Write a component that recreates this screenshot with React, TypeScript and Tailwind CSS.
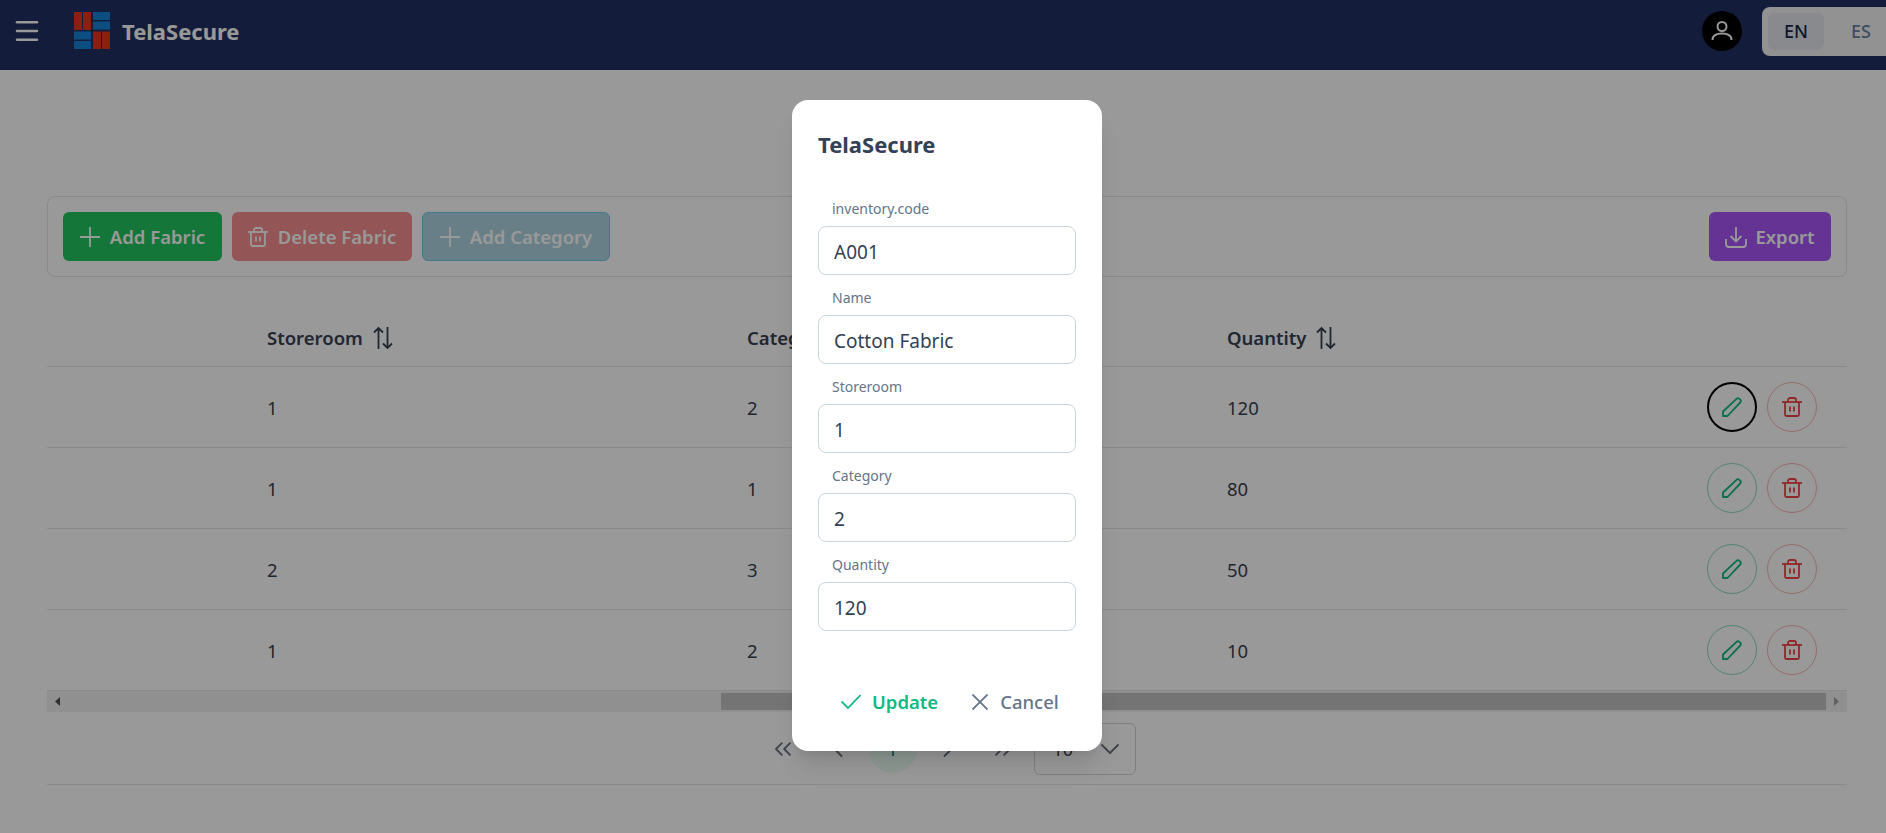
import { ChevronDown, ChevronLeft, ChevronRight, ChevronsLeft, ChevronsRight, Menu } from 'lucide-react';

const FONT = "font-['Noto_Sans','Open_Sans',sans-serif]";

const ROWS = [
  { storeroom: '1', category: '2', quantity: '120', focused: true },
  { storeroom: '1', category: '1', quantity: '80' },
  { storeroom: '2', category: '3', quantity: '50' },
  { storeroom: '1', category: '2', quantity: '10' },
];

const FIELDS = [
  { label: 'inventory.code', value: 'A001' },
  { label: 'Name', value: 'Cotton Fabric' },
  { label: 'Storeroom', value: '1' },
  { label: 'Category', value: '2' },
  { label: 'Quantity', value: '120' },
];

function Logo() {
  return (
    <svg className="-mt-[2px]" width="36" height="37" viewBox="0 0 36 37">
      <rect x="0" y="0" width="8" height="18" fill="#e8361f" />
      <rect x="9" y="0" width="8" height="18" fill="#e8361f" />
      <rect x="19" y="0" width="17" height="8" fill="#1583d5" />
      <rect x="19" y="9.500" width="17" height="8" fill="#1583d5" />
      <rect x="0" y="19.500" width="17" height="8" fill="#1583d5" />
      <rect x="0" y="29" width="17" height="8" fill="#1583d5" />
      <rect x="19" y="19.500" width="8" height="17.500" fill="#e8361f" />
      <rect x="28" y="19.500" width="8" height="17.500" fill="#e8361f" />
    </svg>
  );
}

function PlusIcon() {
  return (
    <svg width="20" height="20" viewBox="0 0 20 20" fill="none" stroke="currentColor" strokeWidth="1.8">
      <path d="M10 0v20M0 10h20" />
    </svg>
  );
}

function TrashIcon() {
  return (
    <svg width="20" height="20" viewBox="0 0 20 20" fill="none" stroke="currentColor" strokeWidth="1.8" strokeLinejoin="round">
      <path d="M0 5h20" />
      <path d="M6 5V3a2 2 0 0 1 2-2h4a2 2 0 0 1 2 2v2" />
      <path d="M3 5v12.500a1.500 1.500 0 0 0 1.500 1.500h11a1.500 1.500 0 0 0 1.500-1.500V5" />
      <path d="M8 9.500v5M12 9.500v5" />
    </svg>
  );
}

function PencilIcon() {
  return (
    <svg width="20" height="20" viewBox="0 0 20 20" fill="none" stroke="currentColor" strokeWidth="1.800" strokeLinejoin="round">
      <path d="M1 19v-4.500L14.500 1.800a2 2 0 0 1 2.800 0l.9.9a2 2 0 0 1 0 2.800L5.500 19z" />
    </svg>
  );
}

function SortIcon() {
  return (
    <svg width="20" height="24" viewBox="0 0 20 24" fill="none" stroke="currentColor" strokeWidth="1.800">
      <path d="M5.500 23V2M1 6.500l4.500-4.500 4.500 4.500" />
      <path d="M14.500 1v21M10 17.500l4.500 4.500 4.500-4.500" />
    </svg>
  );
}

function ExportIcon() {
  return (
    <svg width="22" height="22" viewBox="0 0 22 22" fill="none" stroke="currentColor" strokeWidth="1.8">
      <path d="M11 1v14M5.500 10l5.500 5.500 5.500-5.500" />
      <path d="M1 13v5a3 3 0 0 0 3 3h14a3 3 0 0 0 3-3v-5" />
    </svg>
  );
}

function UserIcon() {
  return (
    <svg width="22" height="22" viewBox="0 0 22 22" fill="none" stroke="currentColor" strokeWidth="2">
      <circle cx="11" cy="6.500" r="4.500" />
      <path d="M1.500 20c0-4 3.500-6.500 9.500-6.500s9.500 2.500 9.500 6.500" />
    </svg>
  );
}

function Header() {
  return (
    <header className="h-[70px] bg-[#213061] flex items-center shrink-0 pb-2">
      <button className="ml-3 text-white">
        <Menu size={30} strokeWidth={2} />
      </button>
      <div className="ml-[32px] flex items-center">
        <Logo />
        <span className="ml-3 text-[22px] font-bold text-white">TelaSecure</span>
      </div>
      <div className="ml-auto flex items-center">
        <div className="w-10 h-10 rounded-full bg-black text-white flex items-center justify-center">
          <UserIcon />
        </div>
        <div className="ml-5 h-[49px] w-[124px] bg-[#f3f4f6] rounded-l-lg flex items-center pl-1.5">
          <span className="w-14 h-[37px] rounded-md bg-[#e5e7eb] flex items-center justify-center text-lg font-medium text-[#1a2647]">EN</span>
          <span className="ml-[27px] text-lg font-medium text-[#6b7f9f]">ES</span>
        </div>
      </div>
    </header>
  );
}

function Toolbar() {
  return (
    <div className="mt-[126px] h-[81px] border border-gray-200 rounded-lg flex items-center justify-between pl-[15px] pr-[15px]">
      <div className="flex items-center gap-2.5">
        <button className="h-[49px] w-[159px] rounded-md bg-[#22c55e] text-white text-[18.5px] font-semibold flex items-center justify-center gap-2.5">
          <PlusIcon /> Add Fabric
        </button>
        <button className="h-[49px] w-[180px] rounded-md bg-[#ef4444] text-white text-[18.5px] font-semibold flex items-center justify-center gap-2.5 opacity-60">
          <TrashIcon /> Delete Fabric
        </button>
        <button className="h-[49px] w-[188px] rounded-md bg-[#7db9d0] border border-[#0ea5e9] text-white text-[18.5px] font-semibold flex items-center justify-center gap-2.5 opacity-60">
          <PlusIcon /> Add Category
        </button>
      </div>
      <button className="h-[49px] w-[122px] rounded-md bg-[#a855f7] text-white text-[18.5px] font-semibold flex items-center justify-center gap-2">
        <ExportIcon /> Export
      </button>
    </div>
  );
}

function Table() {
  return (
    <div className="mt-8 text-[#374151]">
      <div className="grid grid-cols-[220px_480px_480px_480px_1fr] h-[58px] items-center border-b border-gray-200 text-[18.5px] font-semibold">
        <span />
        <span className="flex items-center gap-2.5">Storeroom <SortIcon /></span>
        <span className="flex items-center gap-2.5">Category <SortIcon /></span>
        <span className="flex items-center gap-2.5">Quantity <SortIcon /></span>
        <span />
      </div>
      {ROWS.map((row, i) => (
        <div key={i} className="grid grid-cols-[220px_480px_480px_480px_1fr] h-[81px] items-center border-b border-gray-200 text-[18.5px]">
          <span />
          <span className="pt-px">{row.storeroom}</span>
          <span className="pt-px">{row.category}</span>
          <span className="pt-px">{row.quantity}</span>
          <div className="flex items-center gap-2.5">
            <button className={row.focused
              ? 'w-[50px] h-[50px] rounded-full border-2 border-black text-[#10b981] flex items-center justify-center'
              : 'w-[50px] h-[50px] rounded-full border border-[#10b981]/50 text-[#10b981] flex items-center justify-center'}>
              <PencilIcon />
            </button>
            <button className="w-[50px] h-[50px] rounded-full border border-[#ef4444]/40 text-[#ef4444] flex items-center justify-center">
              <TrashIcon />
            </button>
          </div>
        </div>
      ))}
    </div>
  );
}

function Scrollbar() {
  return (
    <div className="h-[21px] bg-[#f1f1f1] flex items-center">
      <svg className="ml-2" width="5" height="9" viewBox="0 0 5 9"><polygon points="5,0 5,9 0,4.500" fill="#505050" /></svg>
      <div className="ml-[661px] h-[17px] w-[1105px] bg-[#c1c1c1]" />
      <svg className="ml-2" width="5" height="9" viewBox="0 0 5 9"><polygon points="0,0 0,9 5,4.500" fill="#a3a3a3" /></svg>
    </div>
  );
}

function Pagination() {
  return (
    <div className="h-[73px] border-b border-gray-200 flex items-center justify-center pt-px text-[#6b7280]">
      <div className="flex items-center gap-[7px]">
        <button className="w-12 h-12 flex items-center justify-center"><ChevronsLeft size={28} strokeWidth={1.6} /></button>
        <button className="w-12 h-12 flex items-center justify-center"><ChevronLeft size={28} strokeWidth={1.6} /></button>
        <button className="w-12 h-12 rounded-full bg-[#ecfdf5] text-[#047857] text-lg flex items-center justify-center">1</button>
        <button className="w-12 h-12 flex items-center justify-center"><ChevronRight size={28} strokeWidth={1.6} /></button>
        <button className="w-12 h-12 flex items-center justify-center"><ChevronsRight size={28} strokeWidth={1.6} /></button>
        <div className="w-[102px] h-[52px] rounded-md border border-gray-300 flex items-center justify-between pl-[18px] pr-[9px]">
          <span className="text-lg text-[#374151]">10</span>
          <ChevronDown size={32} strokeWidth={1.4} />
        </div>
      </div>
    </div>
  );
}

function EditDialog() {
  return (
    <div className="absolute inset-0 bg-black/40 flex justify-center items-start pl-2 pt-[100px]">
      <div className="w-[310px] h-[651px] bg-white rounded-2xl shadow-xl px-[26px] flex flex-col">
        <h2 className="mt-[28px] h-8 text-[22px] leading-8 font-bold text-[#334155]">TelaSecure</h2>
        <div className="mt-[38px] flex flex-col gap-3">
          {FIELDS.map((f) => (
            <div key={f.label}>
              <label className="block h-[20px] pl-[14px] pt-px text-sm leading-5 text-[#64748b]">{f.label}</label>
              <div className="mt-2 h-[49px] w-[258px] rounded-lg border border-[#cbd5e1] flex items-center px-[15px] pt-[3px] text-[19px] text-[#334155]">
                {f.value}
              </div>
            </div>
          ))}
        </div>
        <div className="mt-[54px] flex items-center h-[33px] text-[18.5px]">
          <button className="ml-[23px] flex items-center gap-[11px] font-semibold text-[#10b981]">
            <svg width="20" height="15" viewBox="0 0 20 15" fill="none" stroke="currentColor" strokeWidth="1.8"><path d="M0.500 7.500L7 14 19.500 1" /></svg>
            Update
          </button>
          <button className="ml-[34px] flex items-center gap-3 font-medium text-[#64748b]">
            <svg width="16" height="16" viewBox="0 0 16 16" fill="none" stroke="currentColor" strokeWidth="1.8"><path d="M0.500 0.500l15 15M15.500 0.500l-15 15" /></svg>
            Cancel
          </button>
        </div>
      </div>
    </div>
  );
}

export default function App() {
  return (
    <div className={`relative h-[833px] overflow-hidden bg-white ${FONT}`}>
      <Header />
      <main className="ml-[47px] w-[1800px]">
        <Toolbar />
        <Table />
        <Scrollbar />
        <Pagination />
      </main>
      <EditDialog />
    </div>
  );
}
